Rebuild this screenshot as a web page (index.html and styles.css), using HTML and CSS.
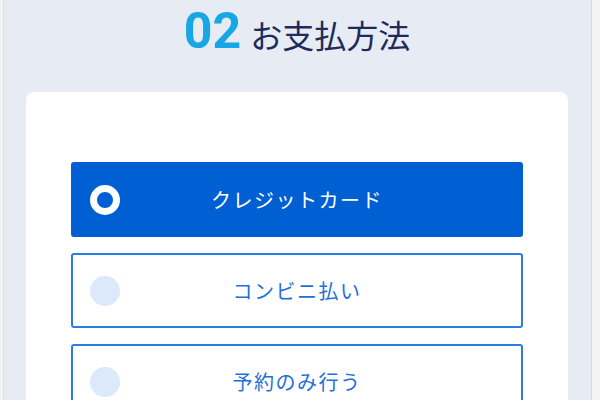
FILE: index.html
```html
<!DOCTYPE html>
<html lang="ja">
<head>
<meta charset="utf-8">
<title>お支払方法</title>
<link rel="stylesheet" href="styles.css">
</head>
<body>
<div class="page">
  <h1 class="title"><span class="num">02</span><span class="label">お支払方法</span></h1>
  <section class="card">
    <div class="options">
      <label class="option selected"><span class="radio"></span><span class="text">クレジットカード</span><span></span></label>
      <label class="option"><span class="radio"></span><span class="text">コンビニ払い</span><span></span></label>
      <label class="option"><span class="radio"></span><span class="text">予約のみ行う</span><span></span></label>
    </div>
  </section>
</div>
</body>
</html>
```
FILE: styles.css
```css
html, body {
  margin: 0;
  padding: 0;
  height: 100%;
  overflow: hidden;
}
body {
  background: #f2f3f4;
  font-family: "Noto Sans CJK JP", "Noto Sans", sans-serif;
}
.page {
  margin-left: 3px;
  width: 542px;
  min-height: 100%;
  background: #e6ebf4;
  border-left: 1px solid #dcdee2;
  border-right: 1px solid #d6d8dc;
  padding: 0 23px 0 22px;
}
.title {
  margin: 0;
  height: 92px;
  display: flex;
  justify-content: center;
  align-items: baseline;
  font-weight: 400;
}
.num {
  font-family: Roboto, "Noto Sans", sans-serif;
  font-weight: 700;
  font-size: 50px;
  line-height: 62px;
  color: #17a7e4;
  margin-right: 9px;
}
.label {
  font-size: 32px;
  color: #1d2b5b;
  line-height: 62px;
}
.card {
  background: #fff;
  border-radius: 8px 8px 0 0;
  padding: 70px 45px 40px;
  min-height: 400px;
}
.options {
  display: flex;
  flex-direction: column;
  gap: 16px;
}
.option {
  height: 75px;
  box-sizing: border-box;
  border: 2px solid #2a7de1;
  border-radius: 3px;
  background: #fff;
  display: grid;
  grid-template-columns: 1fr auto 1fr;
  align-items: center;
  padding: 0 17px;
}
.option .text {
  font-size: 20px;
  letter-spacing: 1.5px;
  color: #1f6fd8;
}
.radio {
  width: 30px;
  height: 30px;
  border-radius: 50%;
  background: #dce9fb;
  box-sizing: border-box;
}
.option.selected {
  background: #005fd3;
  border-color: #005fd3;
}
.option.selected .text {
  color: #fff;
}
.option.selected .radio {
  background: #005fd3;
  border: 7.5px solid #fff;
}
```
